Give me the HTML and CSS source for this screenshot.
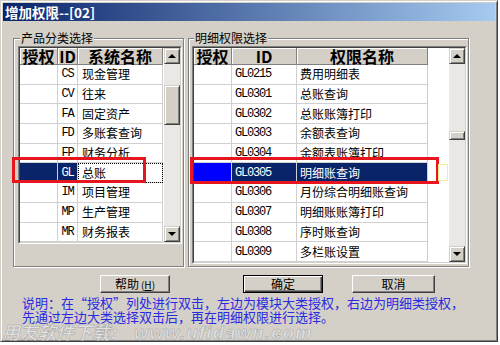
FILE: index.html
```html
<!DOCTYPE html>
<html lang="zh-CN">
<head>
    <meta charset="UTF-8">
    <title>增加权限</title>
    <link rel="stylesheet" href="styles.css">
</head>
<body>

    <div class="window">
        <div class="titlebar">增加权限--[02]</div>

        <div class="panes">
            <!-- 产品分类 -->
            <div class="group group-left">
                <div class="group-title">产品分类选择</div>
                <div class="grid">
                    <div class="grid-view">
                        <div class="grid-body">
                            <table class="table-left">
                                <colgroup>
                                    <col class="c-auth">
                                    <col class="c-code">
                                    <col class="c-name">
                                </colgroup>
                                <tr><th>授权</th><th>ID</th><th>系统名称</th></tr>
                                <tr><td></td><td class="code">CS</td><td class="name">现金管理</td></tr>
                                <tr><td></td><td class="code">CV</td><td class="name">往来</td></tr>
                                <tr><td></td><td class="code">FA</td><td class="name">固定资产</td></tr>
                                <tr><td></td><td class="code">FD</td><td class="name">多账套查询</td></tr>
                                <tr><td></td><td class="code">FP</td><td class="name">财务分析</td></tr>
                                <tr class="picked"><td class="hl"></td><td class="code hl">GL</td><td class="name focus">总账</td></tr>
                                <tr><td></td><td class="code">IM</td><td class="name">项目管理</td></tr>
                                <tr><td></td><td class="code">MP</td><td class="name">生产管理</td></tr>
                                <tr><td></td><td class="code">MR</td><td class="name">财务报表</td></tr>
                            </table>
                        </div>
                        <div class="scrollbar">
                            <div class="sb-btn sb-up"></div>
                            <div class="sb-thumb thumb-left"></div>
                            <div class="sb-btn sb-down"></div>
                        </div>
                    </div>
                </div>
            </div>

            <!-- 明细权限 -->
            <div class="group group-right">
                <div class="group-title">明细权限选择</div>
                <div class="grid">
                    <div class="grid-view">
                        <div class="grid-body">
                            <table class="table-right">
                                <colgroup>
                                    <col class="c-auth">
                                    <col class="c-code-wide">
                                    <col class="c-name-wide">
                                </colgroup>
                                <tr><th>授权</th><th>ID</th><th>权限名称</th></tr>
                                <tr><td></td><td class="code">GL0215</td><td class="name">费用明细表</td></tr>
                                <tr><td></td><td class="code">GL0301</td><td class="name">总账查询</td></tr>
                                <tr><td></td><td class="code">GL0302</td><td class="name">总账账簿打印</td></tr>
                                <tr><td></td><td class="code">GL0303</td><td class="name">余额表查询</td></tr>
                                <tr><td></td><td class="code">GL0304</td><td class="name">余额表账簿打印</td></tr>
                                <tr><td class="checked"></td><td class="code hl">GL0305</td><td class="name hl">明细账查询</td></tr>
                                <tr><td></td><td class="code">GL0306</td><td class="name">月份综合明细账查询</td></tr>
                                <tr><td></td><td class="code">GL0307</td><td class="name">明细账账簿打印</td></tr>
                                <tr><td></td><td class="code">GL0308</td><td class="name">序时账查询</td></tr>
                                <tr><td></td><td class="code">GL0309</td><td class="name">多栏账设置</td></tr>
                            </table>
                        </div>
                        <div class="scrollbar">
                            <div class="sb-btn sb-up"></div>
                            <div class="sb-thumb thumb-right"></div>
                            <div class="sb-btn sb-down"></div>
                        </div>
                    </div>
                </div>
            </div>
        </div>

        <!-- Buttons -->
        <div class="actions">
            <button type="button" class="btn btn-help">帮助<span class="key">(<u>H</u>)</span></button>
            <button type="button" class="btn btn-ok">确定</button>
            <button type="button" class="btn btn-cancel">取消</button>
        </div>

        <p class="note">说明：在“授权”列处进行双击，左边为模块大类授权，右边为明细类授权，<br>先通过左边大类选择双击后，再在明细权限进行选择。</p>

        <!-- annotations drawn over the dialog -->
        <div class="mark mark-left"></div>
        <div class="mark mark-right"></div>
        <div class="mark-soft"></div>
        <div class="watermark">用友软件下载: <span class="url">www.ufidawn.com</span></div>
    </div>

</body>
</html>
```

FILE: styles.css
```css
* {
    box-sizing: border-box;
}

body {
    margin: 0;
    background: #fff;
    font-family: "Noto Sans CJK SC", sans-serif;
    font-size: 12px;
    color: #000;
}

/* Dialog frame */
.window {
    position: relative;
    width: 498px;
    height: 342px;
    padding: 2px;
    background: #d4d0c8;
    border: 1px solid;
    border-color: #d4d0c8 #404040 #404040 #d4d0c8;
    box-shadow: inset 1px 1px #fff, inset -1px -1px #808080;
}

.titlebar {
    height: 18px;
    padding-left: 2px;
    background: linear-gradient(to right, #0a246a, #a6caf0);
    color: #fff;
    font-weight: bold;
    font-size: 13.5px;
    line-height: 18px;
}

/* Two group boxes */
.panes {
    display: flex;
    gap: 4px;
    margin-top: 17px;
    padding-left: 10px;
}

.group {
    height: 229px;
    border: 1px solid #808080;
    box-shadow: inset 1px 1px #fff, 1px 1px #fff;
}

.group-left {
    width: 171px;
    padding-left: 4px;
}

.group-right {
    width: 281px;
    padding-left: 3px;
}

.group-title {
    width: fit-content;
    margin: -8px 0 0 2px;
    padding: 0 1px;
    background: #d4d0c8;
    line-height: 14px;
}

/* Grid */
.grid {
    width: fit-content;
    margin-top: 1px;
    border: 1px solid;
    border-color: #808080 #fff #fff #808080;
}

.grid-view {
    display: flex;
    background: #fff;
    border: 1px solid;
    border-color: #404040 #d4d0c8 #d4d0c8 #404040;
}

.grid-body {
    display: flex;
}

.group-right .grid-body {
    width: 254px;
}

table {
    border-spacing: 0;
    table-layout: fixed;
}

.table-left {
    width: 143px;
}

.table-right {
    width: 234px;
}

.c-auth { width: 38px; }
.c-code { width: 20px; }
.c-name { width: 85px; }
.c-code-wide { width: 65px; }
.c-name-wide { width: 131px; }

th {
    height: 17px;
    padding: 0;
    background: #d4d0c8;
    border-right: 1px solid #808080;
    border-bottom: 1px solid #808080;
    box-shadow: inset 1px 1px #fff;
    font-size: 16px;
    line-height: 16px;
    font-weight: bold;
}

td {
    height: 19.7px;
    padding: 0;
    border-right: 1px solid #d0d0d0;
    border-bottom: 1px solid #d0d0d0;
    line-height: 14px;
    white-space: nowrap;
    overflow: hidden;
}

td.code {
    font-family: "Liberation Mono", monospace;
    font-size: 12px;
    letter-spacing: -1.2px;
}

.table-left td.code {
    text-align: center;
}

.table-right td.code {
    padding-left: 3px;
}

td.name {
    padding-left: 4px;
}

.table-right td.name {
    padding-left: 3px;
}

td.hl {
    background: #0a246a;
    color: #fff;
}

td.checked {
    background: #0000ff;
}

td.focus {
    outline: 1px dotted #000;
    outline-offset: -1px;
}

/* Scrollbars */
.scrollbar {
    display: flex;
    flex-direction: column;
    width: 16px;
    margin-left: 1px;
    background: #eae8e4;
}

.sb-btn,
.sb-thumb {
    background: #d4d0c8;
    border: 1px solid;
    border-color: #d4d0c8 #404040 #404040 #d4d0c8;
    box-shadow: inset 1px 1px #fff, inset -1px -1px #808080;
}

.sb-btn {
    display: flex;
    align-items: center;
    justify-content: center;
    height: 16px;
}

.sb-btn::before {
    content: "";
    border: 4px solid transparent;
}

.sb-up::before {
    border-top-width: 0;
    border-bottom-color: #000;
}

.sb-down::before {
    border-bottom-width: 0;
    border-top-color: #000;
}

.sb-thumb {
    margin-bottom: auto;
}

.thumb-left {
    height: 40px;
    margin-top: 21px;
}

.thumb-right {
    height: 9px;
    margin-top: 67px;
}

/* Buttons */
.actions {
    display: flex;
    margin-top: 8px;
}

.btn {
    height: 18px;
    padding: 0;
    background: #d4d0c8;
    border: 1px solid;
    border-color: #fff #404040 #404040 #fff;
    box-shadow: inset -1px -1px #808080;
    font-family: "Noto Sans CJK SC", sans-serif;
    font-size: 12px;
    line-height: 14px;
    color: #000;
}

.btn-help {
    width: 70px;
    margin-left: 97px;
}

.btn-help .key {
    font-size: 10px;
    margin-left: 2px;
}

.btn-ok {
    width: 80px;
    margin-left: 73px;
    border-color: #000;
    box-shadow: inset 1px 1px #fff, inset -1px -1px #404040, inset -2px -2px #808080;
}

.btn-cancel {
    width: 83px;
    margin-left: 29px;
}

/* Hint text */
.note {
    margin: 3px 0 0 19px;
    color: #2a2ae0;
    font-size: 13px;
    line-height: 14px;
}

/* Red marker boxes and watermark */
.mark {
    position: absolute;
    border: 3px solid #e5161d;
}

.mark-left {
    left: 11px;
    top: 156px;
    width: 134px;
    height: 26px;
}

.mark-right {
    left: 189px;
    top: 156px;
    width: 249px;
    height: 27px;
}

.mark-soft {
    position: absolute;
    left: 437px;
    top: 163px;
    width: 10px;
    height: 17px;
    border: 1px solid #f3ee8a;
}

.watermark {
    position: absolute;
    left: 1px;
    top: 320px;
    color: #e2e2e2;
    -webkit-text-stroke: 0.5px #a4a4a4;
    font-size: 18px;
    line-height: 20px;
    font-weight: bold;
    font-style: italic;
    white-space: nowrap;
}

.watermark .url {
    margin-left: 14px;
    font-family: "Liberation Sans", sans-serif;
    letter-spacing: 1.5px;
}
```
